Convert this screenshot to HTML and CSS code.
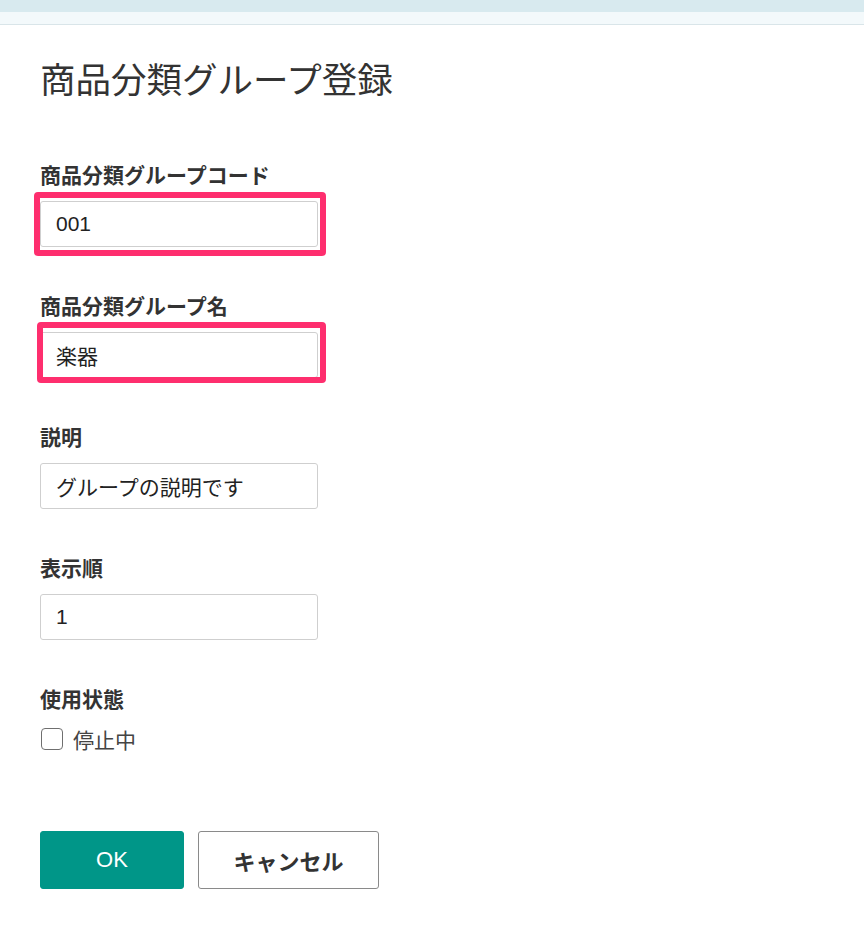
FILE: index.html
```html
<!DOCTYPE html>
<html lang="ja">
<head>
<meta charset="utf-8">
<title>商品分類グループ登録</title>
<link rel="stylesheet" href="styles.css">
</head>
<body>
<header class="topbar">
  <div class="topbar-band"></div>
  <div class="topbar-sub"></div>
</header>
<main class="page">
  <h1 class="title">商品分類グループ登録</h1>
  <form class="form">
    <div class="field">
      <label class="label" for="code">商品分類グループコード</label>
      <div class="control">
        <input class="input" id="code" type="text" value="001">
        <span class="highlight hl-code"></span>
      </div>
    </div>
    <div class="field">
      <label class="label" for="name">商品分類グループ名</label>
      <div class="control">
        <input class="input" id="name" type="text" value="楽器">
        <span class="highlight hl-name"></span>
      </div>
    </div>
    <div class="field">
      <label class="label" for="desc">説明</label>
      <div class="control">
        <input class="input" id="desc" type="text" value="グループの説明です">
      </div>
    </div>
    <div class="field">
      <label class="label" for="order">表示順</label>
      <div class="control">
        <input class="input" id="order" type="text" value="1">
      </div>
    </div>
    <div class="field field-last">
      <span class="label">使用状態</span>
      <label class="check-row">
        <input class="checkbox" type="checkbox">
        <span class="check-text">停止中</span>
      </label>
    </div>
    <div class="actions">
      <button class="btn btn-primary" type="button">OK</button>
      <button class="btn btn-secondary" type="button">キャンセル</button>
    </div>
  </form>
</main>
</body>
</html>
```
FILE: styles.css
```css
* { box-sizing: border-box; }
html, body { margin: 0; padding: 0; background: #fff; }
body {
  font-family: "Liberation Sans", "Noto Sans CJK JP", sans-serif;
  color: #333;
}
.topbar { border-bottom: 1px solid #d9e5e9; }
.topbar-band { height: 12px; background: #d8eaef; }
.topbar-sub { height: 12px; background: #f3f9fb; }

.page { padding: 0 40px; }
.title {
  margin: 35px 0 0;
  font-size: 35.5px;
  line-height: 42px;
  font-weight: 400;
  color: #333;
}
.form { margin-top: 60px; }
.field { margin-bottom: 46px; }
.field-last { margin-bottom: 0; }
.label {
  display: block;
  font-size: 21px;
  line-height: 28px;
  font-weight: 600;
  color: #333;
  margin-bottom: 11px;
}
.control { position: relative; width: 278px; }
.input {
  display: block;
  width: 278px;
  height: 46px;
  padding: 0 15px;
  border: 1px solid #cfcfcf;
  border-radius: 3px;
  font-family: inherit;
  font-size: 21px;
  color: #222;
  background: #fff;
  outline: none;
}
.highlight {
  position: absolute;
  border: 6px solid #fe2e6e;
  border-radius: 4px;
  pointer-events: none;
}
.hl-code { left: -6px; top: -9px; right: -8px; bottom: -9px; }
.hl-name { left: -3px; top: -10px; right: -8px; bottom: -5px; }

.check-row {
  display: flex;
  align-items: center;
  height: 28px;
  margin-top: 2px;
  gap: 10px;
  cursor: pointer;
}
.checkbox {
  appearance: none;
  -webkit-appearance: none;
  margin: 0 0 0 1px;
  width: 22px;
  height: 22px;
  border: 1.5px solid #6f6f6f;
  border-radius: 4px;
  background: #fff;
}
.check-text { font-size: 21px; color: #444; }

.actions {
  display: flex;
  gap: 14px;
  margin-top: 78px;
}
.btn {
  height: 58px;
  padding: 0;
  border-radius: 3px;
  font-family: inherit;
  font-size: 22px;
  white-space: nowrap;
  cursor: pointer;
}
.btn-primary {
  width: 144px;
  background: #009688;
  border: 1px solid #009688;
  color: #fff;
}
.btn-secondary {
  width: 181px;
  background: #fff;
  border: 1px solid #8a8a8a;
  color: #333;
  font-weight: 600;
}
```
